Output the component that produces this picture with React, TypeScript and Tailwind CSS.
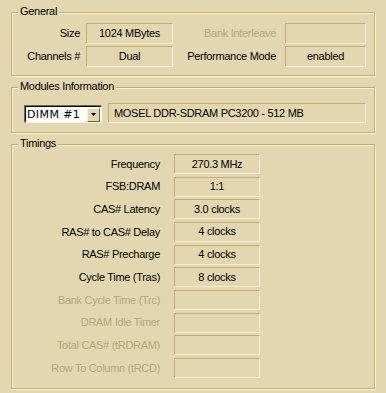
import React from "react";

const BG = "bg-[#e2d7b0]";

function Group({ title, className, children }: { title: string; className: string; children: React.ReactNode }) {
  return (
    <div
      className={`relative w-[364px] border border-[#c4ac68] shadow-[inset_1px_1px_0_#faf3d9,1px_1px_0_#faf3d9] ${className}`}
    >
      <span className={`absolute top-[-8px] left-[6px] px-[2px] leading-[13px] ${BG}`}>{title}</span>
      {children}
    </div>
  );
}

function Box({ children, w, h = "h-[21px]" }: { children?: React.ReactNode; w: string; h?: string }) {
  return (
    <div
      className={`${w} ${h} flex items-center justify-center border border-t-[#c6ae6a] border-l-[#c6ae6a] border-r-[#f6eed2] border-b-[#f6eed2] leading-[13px]`}
    >
      {children}
    </div>
  );
}

const timings: [string, string, boolean][] = [
  ["Frequency", "270.3 MHz", true],
  ["FSB:DRAM", "1:1", true],
  ["CAS# Latency", "3.0 clocks", true],
  ["RAS# to CAS# Delay", "4 clocks", true],
  ["RAS# Precharge", "4 clocks", true],
  ["Cycle Time (Tras)", "8 clocks", true],
  ["Bank Cycle Time (Trc)", "", false],
  ["DRAM Idle Timer", "", false],
  ["Total CAS# (tRDRAM)", "", false],
  ["Row To Column (tRCD)", "", false],
];

export default function App() {
  return (
    <div
      className={`w-[386px] h-[393px] overflow-hidden ${BG} pl-[11px] pt-[12px] text-[11px] tracking-[-0.3px] text-black font-['Liberation_Sans',Arial,sans-serif]`}
    >
      <Group title="General" className="h-[64px] pt-[10px]">
        <div className="flex flex-col gap-[2px]">
          <div className="flex items-center">
            <div className="w-[68px] text-right">Size</div>
            <div className="ml-[6px]">
              <Box w="w-[87px]">1024 MBytes</Box>
            </div>
            <div className="w-[103px] text-right text-[#b5a679]">Bank Interleave</div>
            <div className="ml-[9px]">
              <Box w="w-[81px]" />
            </div>
          </div>
          <div className="flex items-center">
            <div className="w-[68px] text-right">Channels #</div>
            <div className="ml-[6px]">
              <Box w="w-[87px]">Dual</Box>
            </div>
            <div className="w-[103px] text-right">Performance Mode</div>
            <div className="ml-[9px]">
              <Box w="w-[81px]">enabled</Box>
            </div>
          </div>
        </div>
      </Group>

      <Group title="Modules Information" className="mt-[11px] h-[46px] pt-[15px]">
        <div className="flex items-end">
          <div className="ml-[12px] w-[78px] h-[18px] flex items-center bg-white border border-t-[#7a6a42] border-l-[#7a6a42] border-r-[#fbf5df] border-b-[#fbf5df] shadow-[inset_1px_1px_0_#000]">
            <span className="flex-1 pl-[2px] leading-[13px] font-['DejaVu_Sans',sans-serif] text-[11px] tracking-[0.4px]">
              DIMM #1
            </span>
            <div className="w-[13px] h-[14px] mr-[1px] mt-[1px] flex items-center justify-center bg-[#e2d7b0] border border-t-[#fbf5df] border-l-[#fbf5df] border-r-[#6e603a] border-b-[#6e603a]">
              <svg width="5" height="3" viewBox="0 0 5 3">
                <path d="M0 0h5L2.5 3z" fill="#000" />
              </svg>
            </div>
          </div>
          <div className="ml-[6px] w-[258px] h-[20px] flex items-center pl-[5px] border border-t-[#c6ae6a] border-l-[#c6ae6a] border-r-[#f6eed2] border-b-[#f6eed2] leading-[13px]">
            MOSEL DDR-SDRAM PC3200 - 512 MB
          </div>
        </div>
      </Group>

      <Group title="Timings" className="mt-[11px] h-[245px] pt-[9px]">
        <div className="flex flex-col gap-[2.67px]">
          {timings.map(([label, value, enabled]) => (
            <div key={label} className="flex items-center">
              <div className={`w-[148px] text-right ${enabled ? "text-black" : "text-[#b5a679]"}`}>{label}</div>
              <div className="ml-[14px]">
                <Box w="w-[86px]" h="h-[20px]">
                  {value}
                </Box>
              </div>
            </div>
          ))}
        </div>
      </Group>
    </div>
  );
}
